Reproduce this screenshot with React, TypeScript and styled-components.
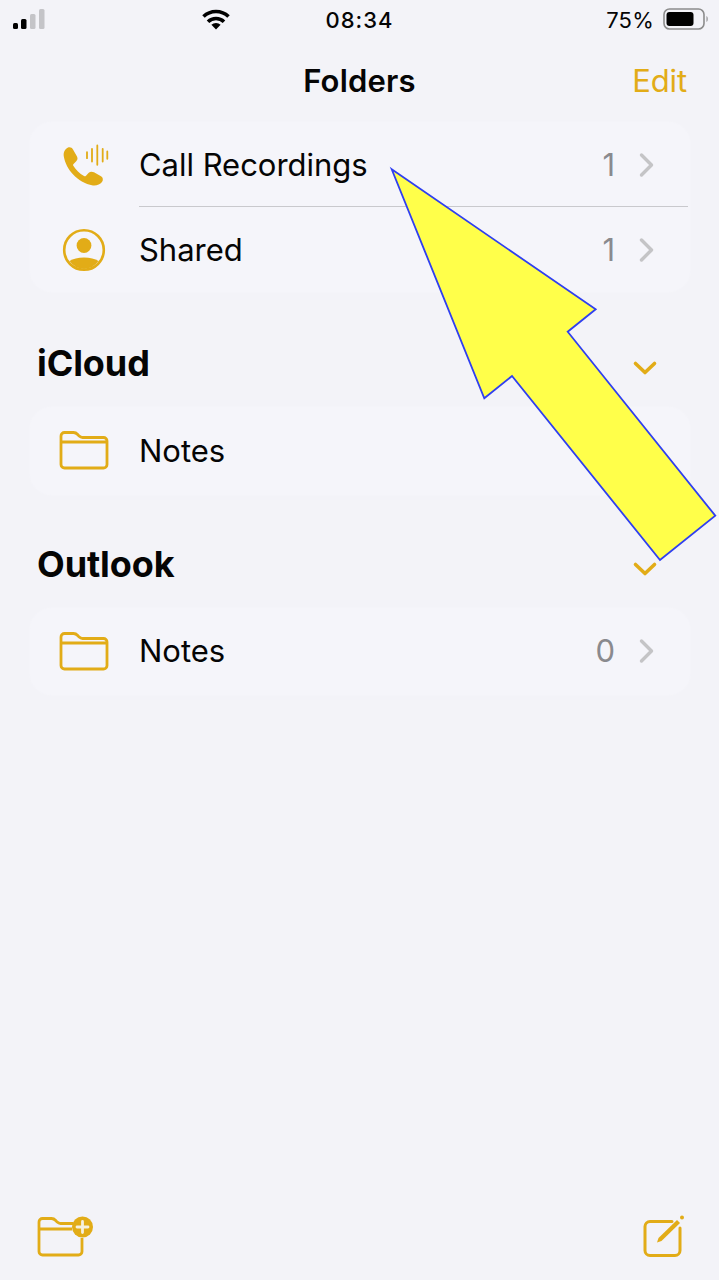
import React from "react";
import styled, { createGlobalStyle } from "styled-components";

const Global = createGlobalStyle`
  html, body { margin: 0; padding: 0; background: #f3f3f8; }
  * { box-sizing: border-box; }
`;
const accent = "#e2ac17";

const Page = styled.div`
  position: relative; width: 719px; height: 1280px; overflow: hidden;
  display: flex; flex-direction: column;
  background: #f3f3f8; color: #050505;
  font-family: Inter, "Liberation Sans", sans-serif;
`;
const StatusBar = styled.div`
  display: grid; grid-template-columns: 1fr auto 1fr; align-items: center;
  height: 40px; padding: 0 12px;
`;
const StatusLeft = styled.div`display: flex; align-items: center; justify-content: space-between; padding-right: 95px;`;
const StatusRight = styled.div`display: flex; align-items: center; justify-content: flex-end; gap: 9px; margin-right: -2px;`;
const StatusIcon = styled.span`display: flex; margin-bottom: 2px;`;
const Clock = styled.div`font-size: 22px; font-weight: 500; letter-spacing: 1px;`;
const Percent = styled.div`font-size: 22px; font-weight: 400; letter-spacing: 0.2px;`;
const NavBar = styled.div`
  height: 82px; display: grid; grid-template-columns: 1fr auto 1fr; align-items: center;
  padding: 0 32px 2px;
`;
const Title = styled.div`font-size: 31px; font-weight: 600; letter-spacing: 0.2px;`;
const Edit = styled.div`font-size: 31px; color: ${accent}; justify-self: end; letter-spacing: -0.1px;`;
const Card = styled.div`
  margin: 0 29px 0 30px; background: #f5f5fa; border-radius: 22px;
  box-shadow: 0 0 0 1px #f4f4f9;
`;
const Row = styled.div`
  display: flex; align-items: center;
  height: ${p => p.$h}px;
  padding: ${p => p.$pt ?? 0}px 35px ${p => p.$pb ?? 0}px 28px;
`;
const IconCell = styled.div`width: 52px; height: 48px; display: flex; align-items: center; justify-content: center; margin-right: 29px;`;
const RowLabel = styled.div`flex: 1; font-size: 31px; letter-spacing: -0.03px;`;
const Count = styled.div`font-size: 31px; color: #8a8a8e; margin-right: 24px;`;
const Divider = styled.div`height: 1px; background: #c9c9cd; margin-left: 109px; margin-right: 2px;`;
const SectionHeader = styled.div`
  display: flex; align-items: center; justify-content: space-between;
  height: ${p => p.$h}px; padding: ${p => p.$pt}px 61px 0 37px;
`;
const SectionTitle = styled.div`font-size: 36px; font-weight: 650; letter-spacing: -0.1px; margin-bottom: 2px;`;
const DownSlot = styled.span`display: flex; margin-top: 7px;`;
const Spacer = styled.div`flex: 1;`;
const Toolbar = styled.div`
  display: flex; align-items: center; justify-content: space-between;
  height: 70px; padding: 0 33px 0 37px; margin-bottom: 9px;
`;
const ArrowLayer = styled.svg`position: absolute; left: 0; top: 0; pointer-events: none;`;

const Signal = () => (
  <svg width="34" height="22" viewBox="0 0 34 22">
    <rect x="1" y="15" width="5" height="6" rx="1.5" fill="#000" />
    <rect x="9" y="11" width="5.5" height="10" rx="1.5" fill="#000" />
    <rect x="18" y="6" width="5.5" height="15" rx="1.5" fill="#c4c4c8" />
    <rect x="27" y="1" width="5.5" height="20" rx="1.5" fill="#c4c4c8" />
  </svg>
);
const Wifi = () => (
  <svg width="30" height="22" viewBox="0 0 30 22">
    <path d="M2.5 8.500A18 18 0 0 1 27.500 8.500M7 13.800A11.500 11.500 0 0 1 23 13.800" fill="none" stroke="#000" strokeWidth="3.600" />
    <path d="M15 21.500l-4.600-4.700a6.500 6.500 0 0 1 9.200 0z" fill="#000" />
  </svg>
);
const Battery = () => (
  <svg width="46" height="22" viewBox="0 0 46 22">
    <rect x="1" y="1" width="40" height="20" rx="5.5" fill="none" stroke="#8c8c8c" strokeWidth="1.6" />
    <rect x="3.500" y="4" width="27" height="14" rx="3" fill="#000" />
    <path d="M43.500 8c1.600.6 1.600 5.400 0 6z" fill="#8c8c8c" />
  </svg>
);
const Chevron = () => (
  <svg width="16" height="26" viewBox="0 0 16 26">
    <path d="M2.500 3l10 10-10 10" fill="none" stroke="#c4c4c6" strokeWidth="3.400" strokeLinecap="round" strokeLinejoin="round" />
  </svg>
);
const Down = () => (
  <svg width="26" height="16" viewBox="0 0 26 16">
    <path d="M3.500 3.500l9.500 9 9.500-9" fill="none" stroke={accent} strokeWidth="3.600" strokeLinecap="round" strokeLinejoin="round" />
  </svg>
);
const Folder = () => (
  <svg width="50" height="40" viewBox="0 0 50 40">
    <path d="M2 12V6a3.500 3.500 0 0 1 3.500-3.500h9c2 0 3 .7 4.200 2l1.500 1.600c1 1 1.800 1.400 3.300 1.400H44.500A3.500 3.500 0 0 1 48 11v23.500a3.500 3.500 0 0 1-3.500 3.500h-39A3.500 3.500 0 0 1 2 34.500V12h46" fill="none" stroke={accent} strokeWidth="2.800" strokeLinejoin="round" />
  </svg>
);
const Phone = () => (
  <svg width="50" height="44" viewBox="0 0 50 44">
    <path d="M9 4.500C11 3.800 13 4.500 14 6.500L18 13.500C19 15.500 18.500 17 17 18.500L14.500 21C14 21.500 14 22 14.300 22.800C17 27 20.500 30.500 25 33C25.700 33.400 26.400 33.300 27 32.700L29.500 30C31 28.500 33 28.200 35 29.300L42 33.300C44 34.500 44.500 37 43 39C41 41.500 37.500 43 34 42.500C18 39.500 7 26 4.800 13.500C4.200 9.500 5.800 6 9 4.500Z" fill={accent} />
    <path d="M28 9.200v6M33 5.800v12.700M38.300 2.500v19.300M43.700 5.800v12.700M48.300 8.500v7.300" fill="none" stroke={accent} strokeWidth="1.800" strokeLinecap="round" />
  </svg>
);
const Person = () => (
  <svg width="44" height="44" viewBox="0 0 44 44">
    <circle cx="22" cy="22" r="19.800" fill="none" stroke={accent} strokeWidth="2.600" />
    <circle cx="22" cy="17.500" r="7.400" fill={accent} />
    <path d="M7.500 33C11 31 16 29.500 22 29.500S33 31 36.500 33A19 19 0 0 1 22 41 19 19 0 0 1 7.500 33z" fill={accent} />
  </svg>
);
const NewFolder = () => (
  <svg width="58" height="42" viewBox="0 0 58 42">
    <path d="M2 14V7a3.500 3.500 0 0 1 3.500-3.500h9c2 0 3 .7 4.200 2l1.500 1.600c1 1 1.800 1.400 3.300 1.400H36M45 23v13.500a3.500 3.500 0 0 1-3.500 3.500h-36A3.500 3.500 0 0 1 2 36.500V14h33" fill="none" stroke={accent} strokeWidth="2.800" strokeLinejoin="round" />
    <circle cx="45.500" cy="12" r="10.500" fill={accent} />
    <path d="M45.500 6.500v11M40 12h11" stroke="#f5f0de" strokeWidth="2.800" strokeLinecap="round" />
  </svg>
);
const Compose = () => (
  <svg width="44" height="44" viewBox="0 0 44 44">
    <path d="M30 7.500H8A5 5 0 0 0 3 12.500v24a5 5 0 0 0 5 5h25a5 5 0 0 0 5-5V14" fill="none" stroke={accent} strokeWidth="3" strokeLinecap="round" />
    <path d="M15 28.500l1.500-4.500L35 6l3 3L19.500 27z" fill={accent} />
    <circle cx="40" cy="3.500" r="2" fill={accent} />
  </svg>
);

export default function App() {
  return (
    <Page>
      <Global />
      <StatusBar>
        <StatusLeft>
          <StatusIcon><Signal /></StatusIcon>
          <StatusIcon><Wifi /></StatusIcon>
        </StatusLeft>
        <Clock>08:34</Clock>
        <StatusRight>
          <Percent>75%</Percent>
          <StatusIcon><Battery /></StatusIcon>
        </StatusRight>
      </StatusBar>
      <NavBar>
        <span />
        <Title>Folders</Title>
        <Edit>Edit</Edit>
      </NavBar>
      <Card>
        <Row $h={84} $pt={1}>
          <IconCell><Phone /></IconCell>
          <RowLabel>Call Recordings</RowLabel>
          <Count>1</Count>
          <Chevron />
        </Row>
        <Divider />
        <Row $h={85}>
          <IconCell><Person /></IconCell>
          <RowLabel>Shared</RowLabel>
          <Count>1</Count>
          <Chevron />
        </Row>
      </Card>
      <SectionHeader $h={115} $pt={29}>
        <SectionTitle>iCloud</SectionTitle>
        <DownSlot><Down /></DownSlot>
      </SectionHeader>
      <Card>
        <Row $h={88} $pb={2}>
          <IconCell><Folder /></IconCell>
          <RowLabel>Notes</RowLabel>
        </Row>
      </Card>
      <SectionHeader $h={113} $pt={27}>
        <SectionTitle>Outlook</SectionTitle>
        <DownSlot><Down /></DownSlot>
      </SectionHeader>
      <Card>
        <Row $h={87} $pb={2}>
          <IconCell><Folder /></IconCell>
          <RowLabel>Notes</RowLabel>
          <Count>0</Count>
          <Chevron />
        </Row>
      </Card>
      <Spacer />
      <Toolbar>
        <NewFolder />
        <Compose />
      </Toolbar>
      <ArrowLayer width="719" height="1280" viewBox="0 0 719 1280">
        <polygon
          points="391.700,169.300 595.700,309.300 567.700,331.700 715.300,515.700 660,560 512,376 484.300,398.300"
          fill="#ffff4a" stroke="#2f3ff0" strokeWidth="1.800" strokeLinejoin="miter"
        />
      </ArrowLayer>
    </Page>
  );
}
